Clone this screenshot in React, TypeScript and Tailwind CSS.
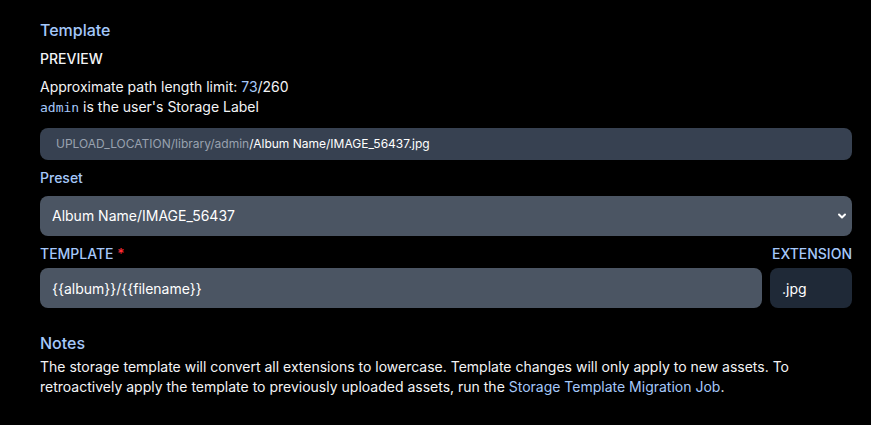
import { ChevronDown } from 'lucide-react'

const blue = 'text-[#a5c8fa]'

export default function App() {
  return (
    <div
      className="min-h-[425px] bg-black pl-10 pr-[19px] pt-[18px] text-sm text-[#f3f4f6]"
      style={{ fontFamily: 'Inter, "Noto Sans", sans-serif' }}
    >
      {/* Template */}
      <h2 className={`text-base leading-6 font-medium ${blue}`}>Template</h2>

      <p className="mt-[7px] font-medium leading-5">PREVIEW</p>

      <div className="mt-2 leading-5">
        <p>
          Approximate path length limit: <span className={blue}>73</span>/260
        </p>
        <p>
          <code className={`${blue} text-[13px]`} style={{ fontFamily: '"DejaVu Sans Mono", monospace' }}>
            admin
          </code>{' '}
          is the user's Storage Label
        </p>
      </div>

      <div className="mt-[10px] flex h-8 items-center rounded-lg bg-[#374151] px-4 text-xs">
        <span className="text-gray-400">UPLOAD_LOCATION/library/admin</span>
        <span className="text-white">/Album Name/IMAGE_56437.jpg</span>
      </div>

      {/* Preset */}
      <p className={`mt-2 font-medium leading-5 ${blue}`}>Preset</p>
      <div className="relative mt-2">
        <select
          className="h-10 w-full appearance-none rounded-lg bg-[#4b5563] px-3 text-sm text-white outline-none"
          defaultValue="album"
        >
          <option value="album">Album Name/IMAGE_56437</option>
        </select>
        <ChevronDown
          className="pointer-events-none absolute right-[4px] top-1/2 h-3 w-3 -translate-y-1/2 text-white"
          strokeWidth={4}
        />
      </div>

      {/* Template + extension */}
      <div className="mt-2 flex gap-2">
        <div className="flex flex-1 flex-col">
          <p className={`font-medium leading-5 ${blue}`}>
            TEMPLATE <span className="text-red-500">*</span>
          </p>
          <input
            className="mt-1 h-10 w-full rounded-lg bg-[#4b5563] px-3 text-sm text-white outline-none"
            defaultValue="{{album}}/{{filename}}"
          />
        </div>
        <div className="flex w-[82px] flex-col">
          <p className={`text-right font-medium leading-5 ${blue}`}>EXTENSION</p>
          <input
            className="mt-1 h-10 w-full rounded-lg bg-[#1f2937] px-3 text-sm text-white outline-none"
            defaultValue=".jpg"
          />
        </div>
      </div>

      {/* Notes */}
      <h3 className={`mt-[23px] text-base leading-6 font-medium ${blue}`}>Notes</h3>
      <p className="mt-[2px] leading-5">
        The storage template will convert all extensions to lowercase. Template changes will only apply to new
        assets. To retroactively apply the template to previously uploaded assets, run the{' '}
        <a className={blue} href="#">
          Storage Template Migration Job
        </a>
        .
      </p>
    </div>
  )
}
